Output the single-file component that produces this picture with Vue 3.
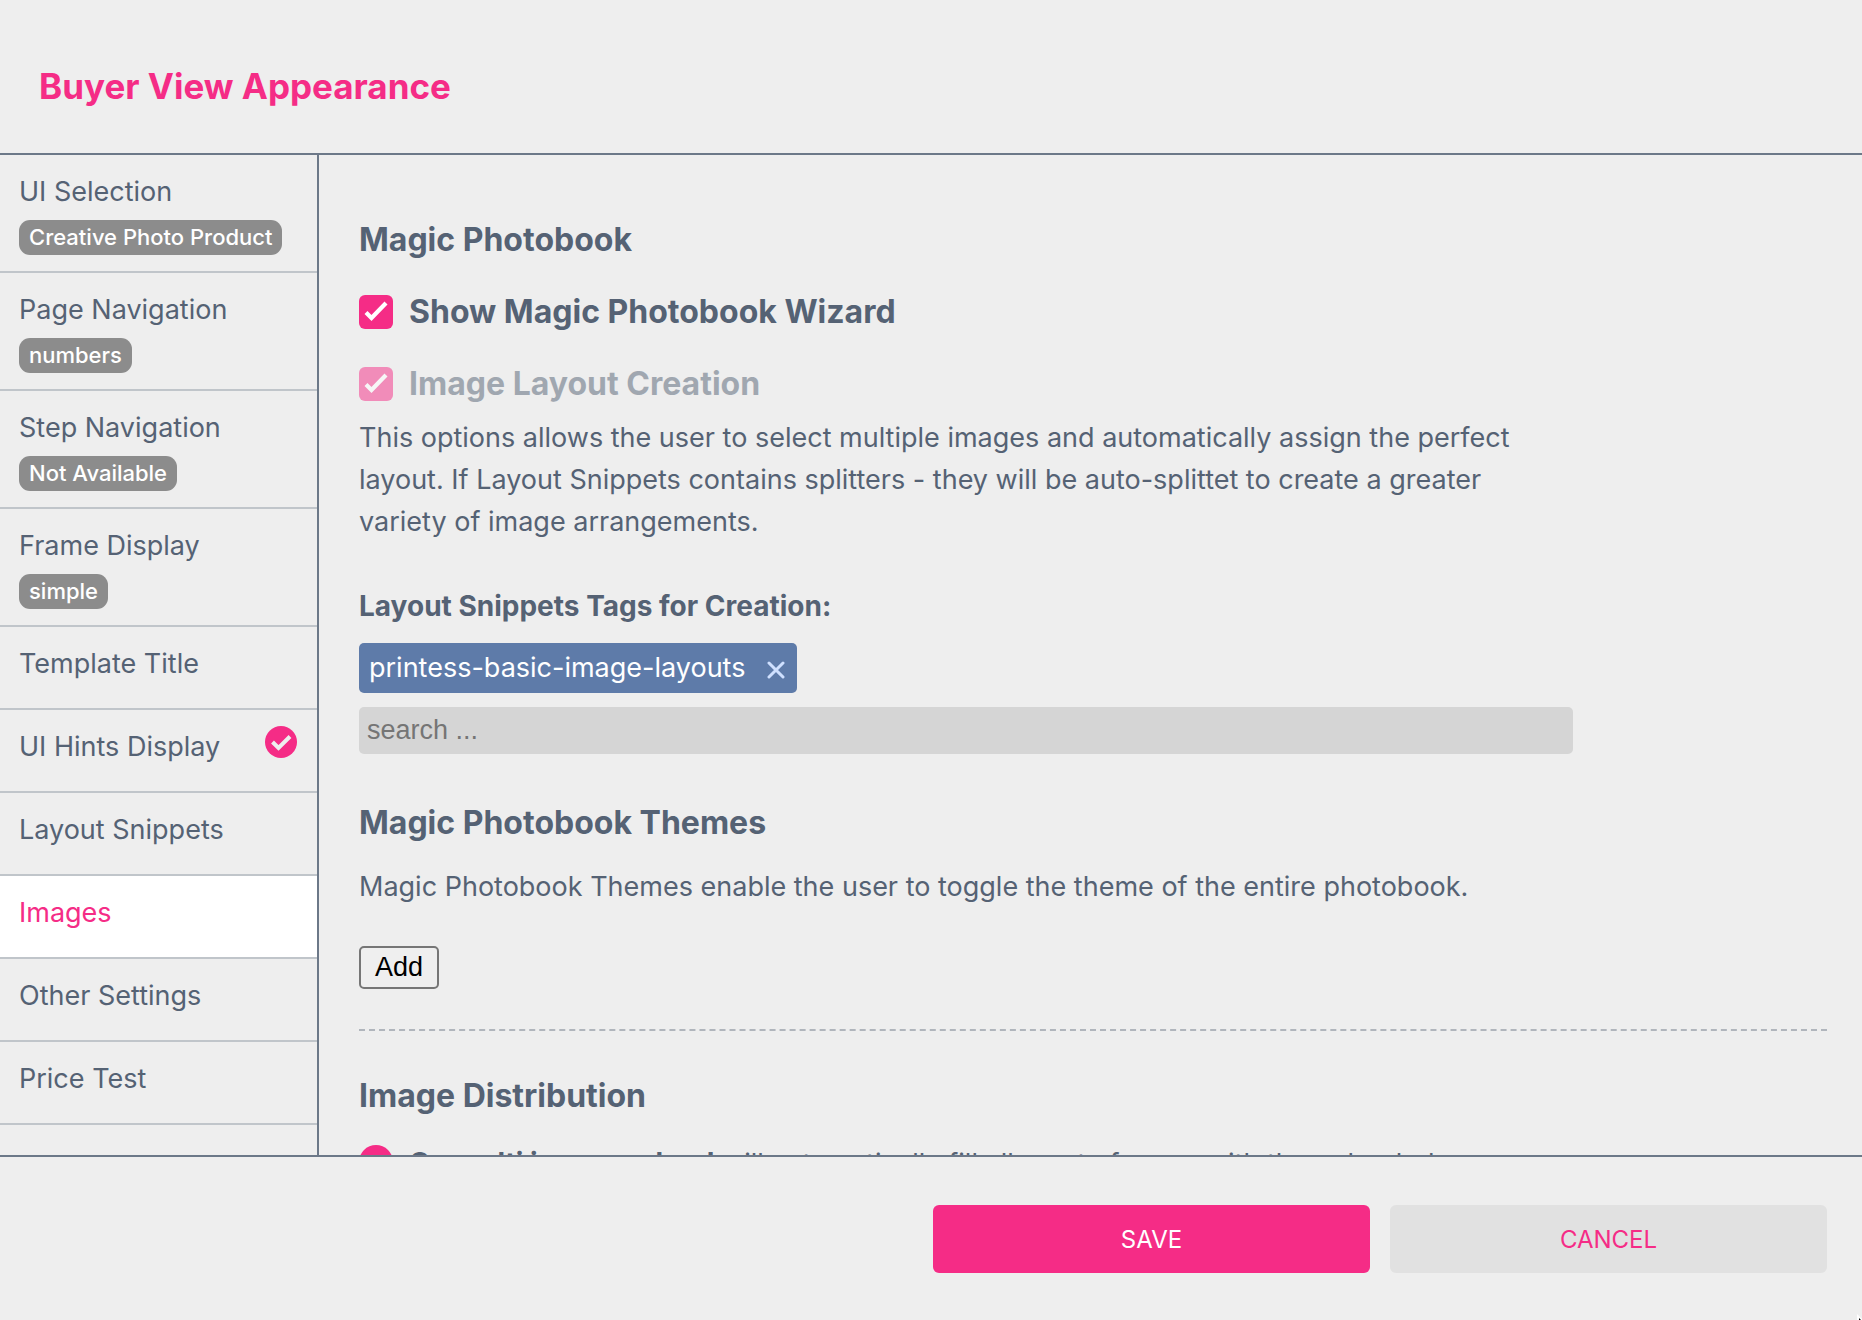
<script setup>
import { ref } from 'vue'

const items = [
  { title: 'UI Selection', badge: 'Creative Photo Product' },
  { title: 'Page Navigation', badge: 'numbers' },
  { title: 'Step Navigation', badge: 'Not Available' },
  { title: 'Frame Display', badge: 'simple' },
  { title: 'Template Title' },
  { title: 'UI Hints Display', checked: true },
  { title: 'Layout Snippets' },
  { title: 'Images' },
  { title: 'Other Settings' },
  { title: 'Price Test' },
]
const active = ref('Images')
const tags = ref(['printess-basic-image-layouts'])
const search = ref('')
const showWizard = ref(true)
const layoutCreation = ref(true)
const distribution = ref('multi')
</script>

<template>
  <div class="dialog">
    <header class="header">
      <h1>Buyer View Appearance</h1>
    </header>

    <div class="body">
      <nav class="sidebar">
        <button
          v-for="item in items"
          :key="item.title"
          type="button"
          class="item"
          :class="{ active: item.title === active }"
          @click="active = item.title"
        >
          <span class="item-text">
            <span>{{ item.title }}</span>
            <span v-if="item.badge" class="badge">{{ item.badge }}</span>
          </span>
          <svg v-if="item.checked" class="item-check" viewBox="0 0 32 32" aria-hidden="true">
            <circle cx="16" cy="16" r="16" fill="#f52c86" />
            <path d="M7.500 16L13.500 22L25 10.500" fill="none" stroke="#eee" stroke-width="4" />
          </svg>
        </button>
      </nav>

      <main class="content">
        <h2>Magic Photobook</h2>
        <label class="check">
          <span class="box">
            <input v-model="showWizard" type="checkbox" />
            <svg v-if="showWizard" viewBox="0 0 34 34" aria-hidden="true">
              <path d="M7 17.500L12.500 23L27 8" fill="none" stroke="#fff" stroke-width="4.200" />
            </svg>
          </span>
          Show Magic Photobook Wizard
        </label>
        <label class="check disabled">
          <span class="box">
            <input v-model="layoutCreation" type="checkbox" disabled />
            <svg v-if="layoutCreation" viewBox="0 0 34 34" aria-hidden="true">
              <path d="M7 17.500L12.500 23L27 8" fill="none" stroke="#fff" stroke-width="4.200" />
            </svg>
          </span>
          Image Layout Creation
        </label>
        <p class="text">
          This options allows the user to select multiple images and automatically assign the perfect
          layout. If Layout Snippets contains splitters - they will be auto-splittet to create a greater
          variety of image arrangements.
        </p>

        <label class="field-label" for="tag-search">Layout Snippets Tags for Creation:</label>
        <div class="tags">
          <span v-for="tag in tags" :key="tag" class="tag">
            {{ tag }}
            <button type="button" :aria-label="'Remove ' + tag" @click="tags = tags.filter(t => t !== tag)">
              <svg viewBox="0 0 18 18" aria-hidden="true">
                <path d="M2 2L16 16M16 2L2 16" fill="none" stroke="#cfe0ff" stroke-width="3" stroke-linecap="round" />
              </svg>
            </button>
          </span>
        </div>
        <input id="tag-search" v-model="search" class="search" type="text" placeholder="search ..." />

        <h2 class="themes">Magic Photobook Themes</h2>
        <p class="text">Magic Photobook Themes enable the user to toggle the theme of the entire photobook.</p>
        <button type="button" class="add">Add</button>

        <hr />

        <h2>Image Distribution</h2>
        <label class="option">
          <input v-model="distribution" type="radio" name="distribution" value="multi" />
          <span><b>On multi image upload</b> will automatically fill all empty frames with the uploaded</span>
        </label>
      </main>
    </div>

    <footer class="footer">
      <button type="button" class="save">SAVE</button>
      <button type="button" class="cancel">CANCEL</button>
    </footer>

    <svg class="pointer" viewBox="0 0 5 6" aria-hidden="true">
      <path d="M0 0L5 5V6H0Z" fill="#fff" />
      <path d="M2 4L4 6H2Z" fill="#000" />
    </svg>
  </div>
</template>

<style>
body {
  margin: 0;
}
</style>

<style scoped>
.dialog {
  position: relative;
  display: flex;
  flex-direction: column;
  height: 100vh;
  background: #eee;
  color: #556274;
  font-family: Inter, "Liberation Sans", sans-serif;
  font-size: 27px;
  line-height: 42px;
}
h1, h2, p {
  margin: 0;
}
button, input {
  margin: 0;
  font-family: inherit;
}
.header {
  padding: 62px 39px 43px;
  border-bottom: 2px solid #6c7888;
}
h1 {
  color: #f52c86;
  font-size: 35px;
  line-height: 48px;
}
.body {
  display: flex;
  flex: 1;
  min-height: 0;
}
.sidebar {
  flex: none;
  width: 317px;
  overflow: hidden;
  border-right: 2px solid #6c7888;
}
.item {
  display: flex;
  justify-content: space-between;
  align-items: flex-start;
  box-sizing: border-box;
  width: 100%;
  min-height: 83px;
  padding: 16px 20px 16px 19px;
  border: 0;
  border-bottom: 2px solid #c0c5ca;
  background: none;
  color: inherit;
  font-size: 27px;
  line-height: 42px;
  text-align: left;
}
.item.active {
  background: #fff;
  color: #f52c86;
}
.item-text {
  display: flex;
  flex-direction: column;
  align-items: flex-start;
}
.badge {
  margin-top: 7px;
  padding: 0 10px;
  border-radius: 11px;
  background: #8c8c8c;
  color: #fff;
  font-size: 22px;
  font-weight: 500;
  line-height: 35px;
}
.item-check {
  width: 32px;
  height: 32px;
  flex: none;
}
.content {
  flex: 1;
  min-width: 0;
  padding: 64px 35px 0 40px;
  overflow: hidden;
}
h2 {
  font-size: 32px;
  line-height: 42px;
}
.check {
  display: flex;
  align-items: center;
  gap: 16px;
  margin-top: 30px;
  font-size: 32px;
  font-weight: 700;
}
.check.disabled {
  opacity: 0.5;
}
.box {
  display: grid;
  width: 34px;
  height: 34px;
}
.box > * {
  grid-area: 1 / 1;
  width: 34px;
  height: 34px;
}
.box input {
  appearance: none;
  border-radius: 6px;
  background: #f52c86;
}
.box svg {
  z-index: 1;
  pointer-events: none;
}
.text {
  max-width: 1214px;
  margin-top: 12px;
}
.field-label {
  display: block;
  margin-top: 42px;
  font-size: 28px;
  font-weight: 700;
}
.tags {
  display: flex;
  margin-top: 16px;
}
.tag {
  display: flex;
  align-items: center;
  gap: 22px;
  padding: 4px 12px 4px 10px;
  border-radius: 5px;
  background: #5e7ba9;
  color: #fff;
}
.tag button {
  width: 18px;
  height: 18px;
  margin-top: 4px;
  padding: 0;
  border: 0;
  background: none;
}
.tag svg {
  display: block;
}
.search {
  display: block;
  box-sizing: border-box;
  width: 100%;
  max-width: 1214px;
  height: 47px;
  margin-top: 14px;
  padding: 0 8px;
  border: 0;
  border-radius: 5px;
  background: #d5d5d5;
  font-family: "Liberation Sans", sans-serif;
  font-size: 27px;
}
.search::placeholder {
  color: #757575;
}
.themes {
  margin-top: 48px;
}
.themes + .text {
  margin-top: 22px;
}
.add {
  display: block;
  height: 43px;
  margin-top: 38px;
  padding: 0 14px;
  border: 2px solid #767676;
  border-radius: 5px;
  background: #efefef;
  color: #000;
  font-family: "Liberation Sans", sans-serif;
  font-size: 27px;
}
hr {
  margin: 40px 0 44px;
  border: 0;
  border-top: 2px dashed #b0b5bc;
}
.option {
  display: flex;
  gap: 16px;
  max-width: 1214px;
  margin-top: 25px;
}
.option b {
  font-size: 28px;
}
.option input {
  appearance: none;
  flex: none;
  width: 34px;
  height: 34px;
  margin-top: 3px;
  border-radius: 50%;
  background: #f52c86;
}
.footer {
  display: flex;
  justify-content: flex-end;
  gap: 20px;
  padding: 48px 35px 47px;
  border-top: 2px solid #6c7888;
}
.footer button {
  width: 437px;
  height: 68px;
  border: 0;
  border-radius: 6px;
  font-size: 24px;
}
.footer .save {
  background: #f52c86;
  color: #fff;
}
.footer .cancel {
  background: #e1e1e1;
  color: #f52c86;
}
.pointer {
  position: absolute;
  right: 0;
  bottom: 0;
  width: 5px;
  height: 6px;
}
</style>
